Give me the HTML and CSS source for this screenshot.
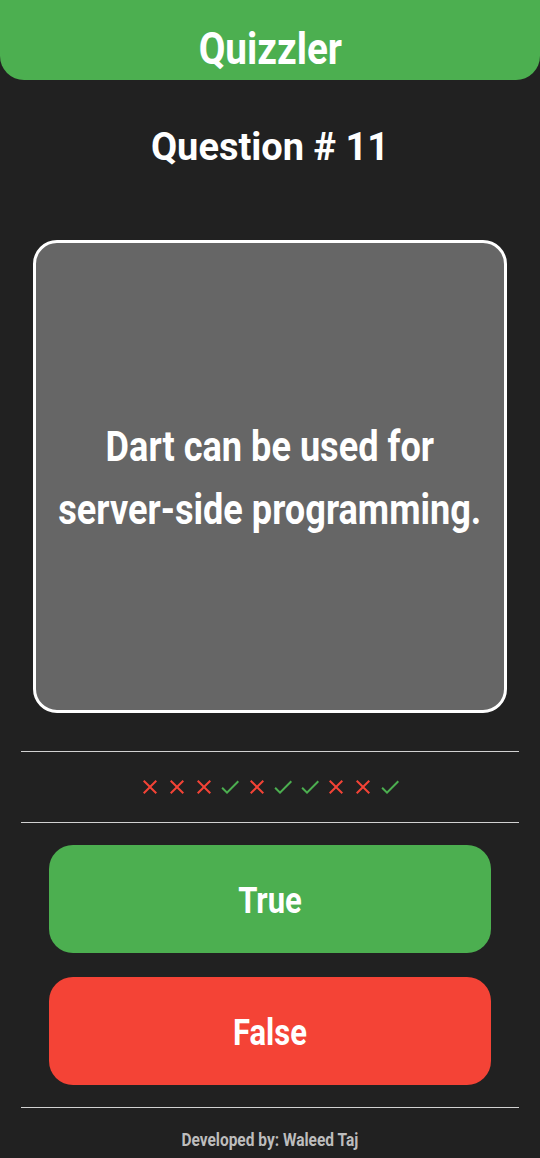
FILE: index.html
```html
<!DOCTYPE html>
<html>
<head>
<meta charset="utf-8">
<link rel="stylesheet" href="styles.css">
</head>
<body>
<div class="app">
  <header class="appbar"><span class="appbar-title cond">Quizzler</span></header>
  <div class="qnum">Question # 11</div>
  <div class="card"><p class="qtext cond">Dart can be used for<br>server-side programming.</p></div>
  <div class="divider first"></div>
  <div class="scores">
    <svg class="ic x" viewBox="0 0 24 24"><path d="M19 6.41L17.59 5 12 10.59 6.41 5 5 6.41 10.59 12 5 17.59 6.41 19 12 13.41 17.59 19 19 17.59 13.41 12z"/></svg>
    <svg class="ic x" viewBox="0 0 24 24"><path d="M19 6.41L17.59 5 12 10.59 6.41 5 5 6.41 10.59 12 5 17.59 6.41 19 12 13.41 17.59 19 19 17.59 13.41 12z"/></svg>
    <svg class="ic x" viewBox="0 0 24 24"><path d="M19 6.41L17.59 5 12 10.59 6.41 5 5 6.41 10.59 12 5 17.59 6.41 19 12 13.41 17.59 19 19 17.59 13.41 12z"/></svg>
    <svg class="ic ok" viewBox="0 0 24 24"><path d="M9 16.17L4.83 12l-1.42 1.41L9 19 21 7l-1.41-1.41z"/></svg>
    <svg class="ic x" viewBox="0 0 24 24"><path d="M19 6.41L17.59 5 12 10.59 6.41 5 5 6.41 10.59 12 5 17.59 6.41 19 12 13.41 17.59 19 19 17.59 13.41 12z"/></svg>
    <svg class="ic ok" viewBox="0 0 24 24"><path d="M9 16.17L4.83 12l-1.42 1.41L9 19 21 7l-1.41-1.41z"/></svg>
    <svg class="ic ok" viewBox="0 0 24 24"><path d="M9 16.17L4.83 12l-1.42 1.41L9 19 21 7l-1.41-1.41z"/></svg>
    <svg class="ic x" viewBox="0 0 24 24"><path d="M19 6.41L17.59 5 12 10.59 6.41 5 5 6.41 10.59 12 5 17.59 6.41 19 12 13.41 17.59 19 19 17.59 13.41 12z"/></svg>
    <svg class="ic x" viewBox="0 0 24 24"><path d="M19 6.41L17.59 5 12 10.59 6.41 5 5 6.41 10.59 12 5 17.59 6.41 19 12 13.41 17.59 19 19 17.59 13.41 12z"/></svg>
    <svg class="ic ok" viewBox="0 0 24 24"><path d="M9 16.17L4.83 12l-1.42 1.41L9 19 21 7l-1.41-1.41z"/></svg>
  </div>
  <div class="divider"></div>
  <div class="answers">
    <button class="btn btn-true"><span class="cond">True</span></button>
    <button class="btn btn-false"><span class="cond">False</span></button>
  </div>
  <div class="divider"></div>
  <footer class="footer"><span class="cond">Developed by: Waleed Taj</span></footer>
</div>
</body>
</html>
```

FILE: styles.css
```css
* { box-sizing: border-box; }
html, body { margin: 0; padding: 0; }
body {
  background: #212121;
  width: 540px;
  height: 1158px;
  overflow: hidden;
  font-family: Roboto, "Liberation Sans", sans-serif;
  color: #fff;
}
.app { display: flex; flex-direction: column; }
.cond {
  display: inline-block;
  white-space: nowrap;
  transform: scaleX(0.85);
}
.appbar {
  height: 80px;
  background: #4caf50;
  border-radius: 0 0 24px 24px;
  display: flex;
  justify-content: center;
  align-items: center;
  padding-top: 17px;
}
.appbar-title { font-weight: 700; font-size: 45px; line-height: 1; transform: scaleX(0.86); }
.qnum {
  height: 160px;
  display: flex;
  justify-content: center;
  align-items: center;
  padding-bottom: 26px;
  font-weight: 700;
  font-size: 38px;
}
.card {
  margin: 0 33px;
  height: 473px;
  border: 3px solid #fff;
  border-radius: 24px;
  background: #666666;
  display: flex;
  align-items: center;
  justify-content: center;
}
.qtext {
  margin: 0;
  text-align: center;
  font-weight: 700;
  font-size: 43px;
  line-height: 63px;
  padding-top: 3px;
  transform: scaleX(0.84);
}
.divider { height: 1px; background: #d2d2d2; margin: 0 21px; }
.divider.first { margin-top: 38px; }
.scores {
  height: 70px;
  display: flex;
  justify-content: center;
  align-items: center;
  gap: 2.6px;
}
.ic { width: 24px; height: 24px; }
.ic.x { fill: #f44336; }
.ic.ok { fill: #4caf50; }
.answers {
  display: flex;
  flex-direction: column;
  gap: 24px;
  padding: 22px 49px 22px;
}
.btn {
  height: 108px;
  border: none;
  border-radius: 24px;
  color: #fff;
  font-family: inherit;
  font-weight: 700;
  font-size: 36px;
  padding-top: 5px;
}
.btn .cond { transform: scaleX(0.86); }
.btn-true { background: #4caf50; }
.btn-false { background: #f44336; }
.footer {
  height: 60px;
  display: flex;
  justify-content: center;
  align-items: center;
  padding-top: 2px;
  color: #bdbdbd;
  font-weight: 700;
  font-size: 18px;
}
.footer .cond { transform: scaleX(0.86); }
```
